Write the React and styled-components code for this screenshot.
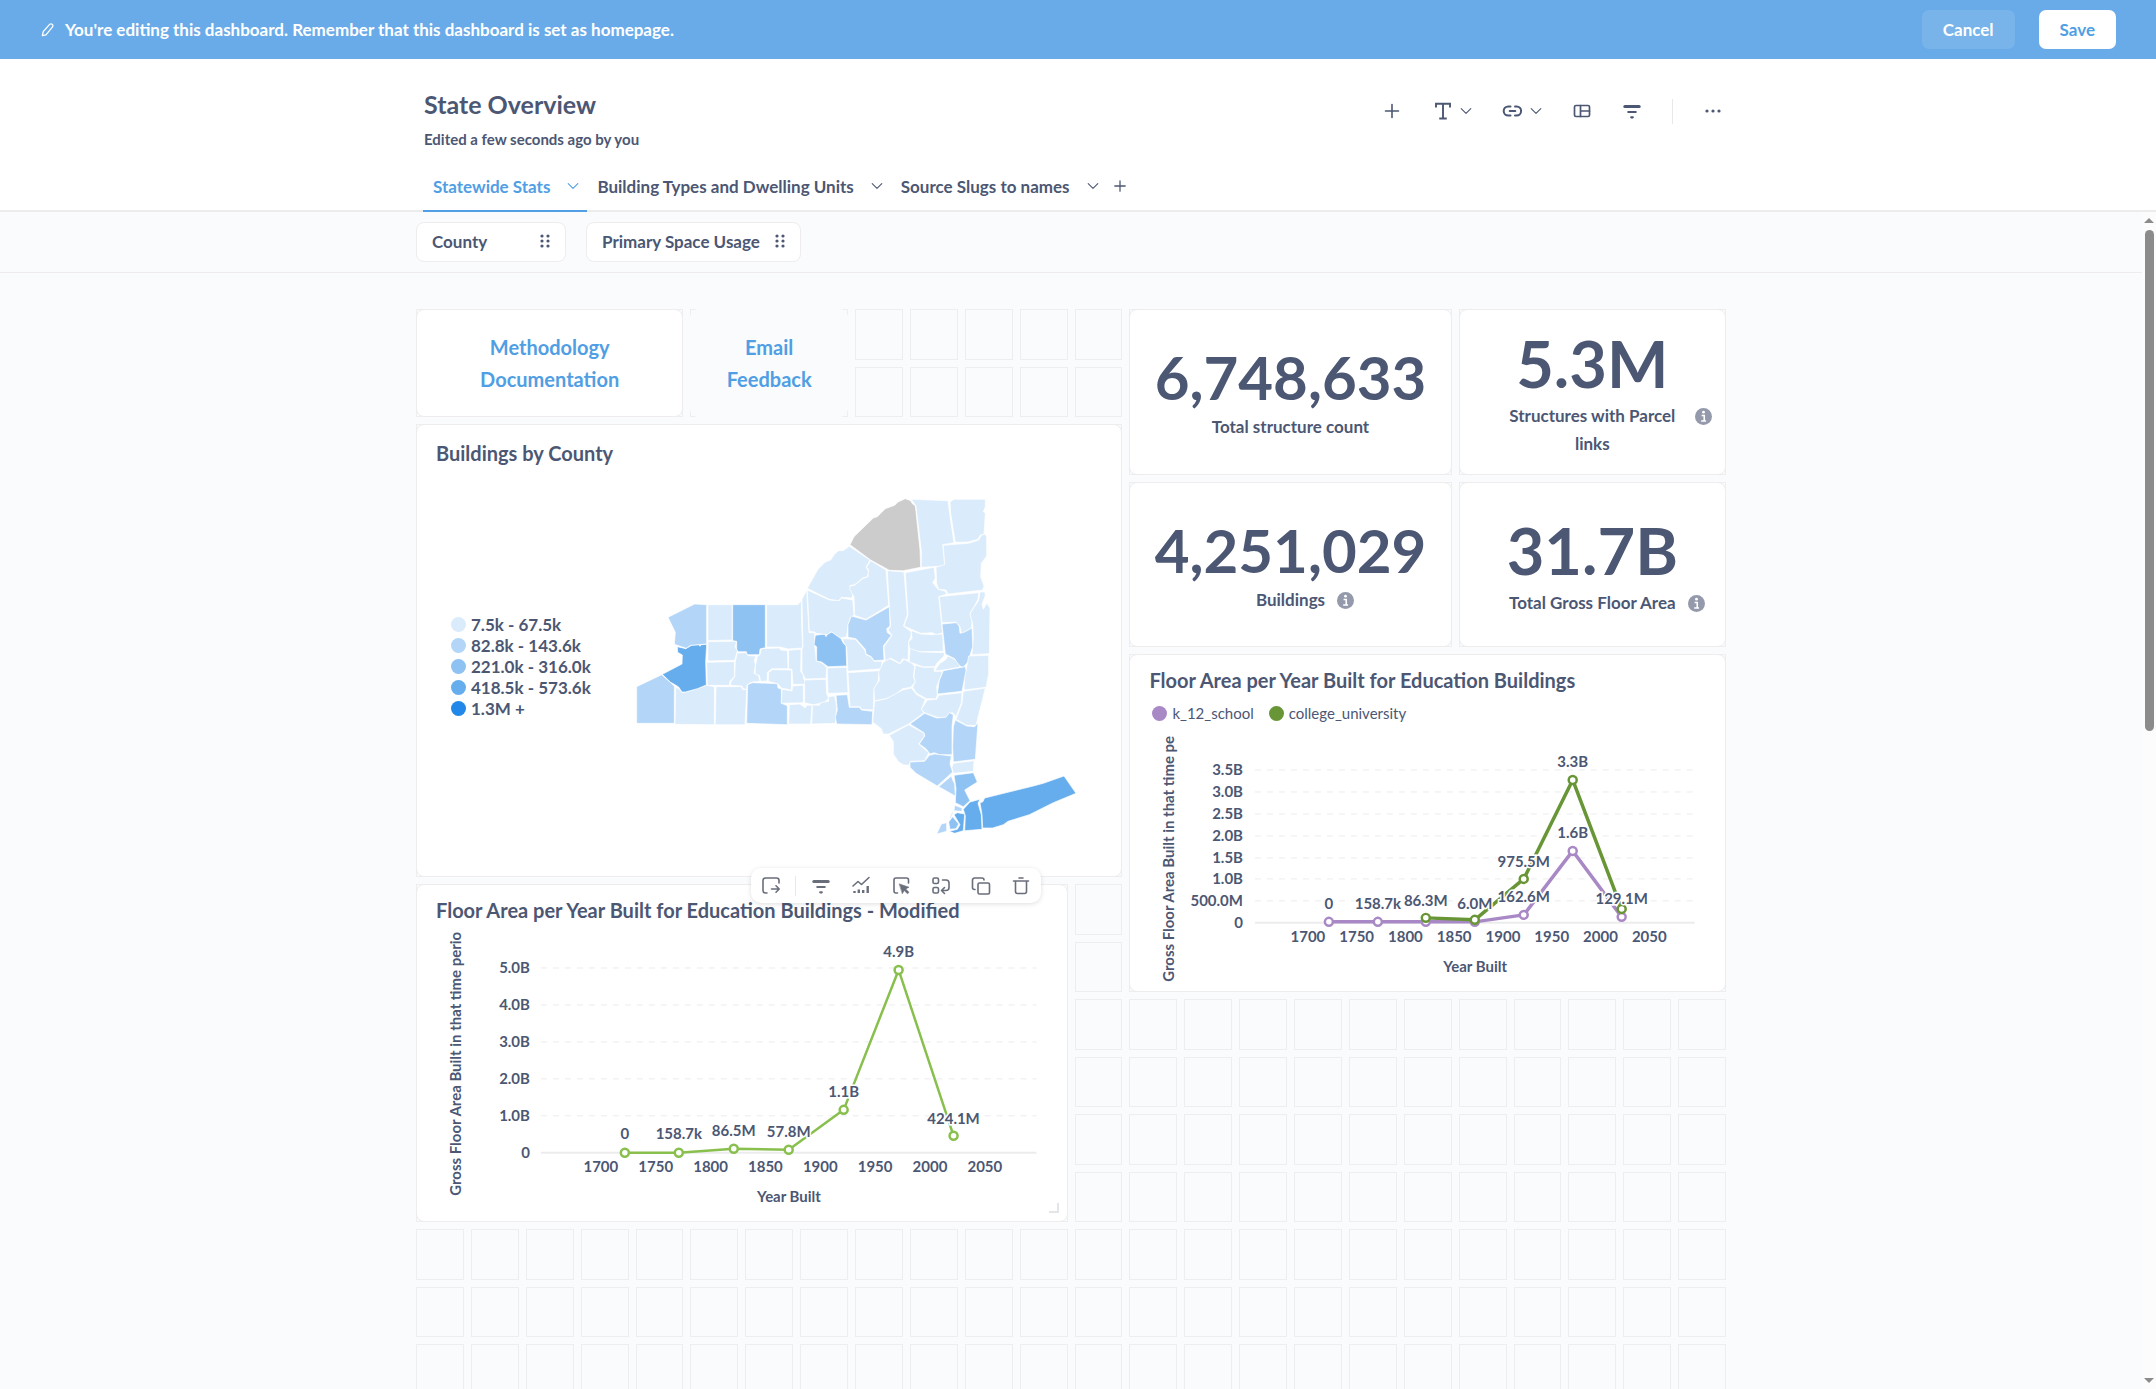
import styled, { createGlobalStyle, css } from 'styled-components';

const colors = {
  brand: '#509ee3',
  banner: '#69abe8',
  text: '#4c5773',
  muted: '#949aab',
  icon: '#696e7b',
  border: '#eeecec',
  cell: '#eeeef0',
  page: '#f9fbfd',
};

const shades = {
  a: '#daebfb',
  b: '#b3d6f8',
  c: '#8ec2f3',
  d: '#66adee',
  e: '#2188e9',
  none: '#cccccc',
};

const mapLegend = [
  { shade: 'a', label: '7.5k - 67.5k' },
  { shade: 'b', label: '82.8k - 143.6k' },
  { shade: 'c', label: '221.0k - 316.0k' },
  { shade: 'd', label: '418.5k - 573.6k' },
  { shade: 'e', label: '1.3M +' },
];

// county outlines: [name, shade, points]
const counties = [
  ['Chautauqua', 'b', '50,620 125,584 152,608 163,619 163,730 50,730'],
  ['Cattaraugus', 'a', '167,622 178,628 186,638 198,636 232,626 260,616 283,620 283,734 165,733'],
  ['Allegany', 'a', '288,620 364,620 368,629 380,629 375,734 286,734'],
  ['Steuben', 'b', '383,614 397,608 472,611 474,624 484,627 484,670 502,677 502,734 380,730'],
  ['Erie', 'd', '172,500 197,506 215,496 237,494 240,499 244,494 260,493 257,545 259,615 232,626 196,636 186,636 176,621 160,611 152,607 127,583 186,552 187,525 173,517'],
  ['Niagara', 'b', '144,412 224,372 260,374 260,492 212,496 199,505 163,493 166,457'],
  ['Orleans', 'a', '264,374 336,374 336,480 264,482'],
  ['Monroe', 'c', '338,374 436,374 436,503 420,507 418,524 382,524 379,515 354,515 350,508 350,484 338,482'],
  ['Genesee', 'a', '264,485 342,484 350,486 345,500 352,512 344,541 264,543'],
  ['Wyoming', 'a', '260,547 343,545 343,590 330,602 328,616 262,616'],
  ['Livingston', 'a', '352,519 378,518 384,527 408,528 403,540 406,555 402,580 415,586 420,604 396,606 381,614 380,627 370,627 366,618 332,616 333,605 344,590 346,545'],
  ['Wayne', 'a', '440,374 534,374 544,362 545,440 548,504 505,507 480,501 440,501'],
  ['Ontario', 'a', '424,506 478,504 482,510 502,512 504,566 456,566 442,577 442,603 422,604 418,586 406,582 406,560 412,530 420,524'],
  ['Yates', 'a', '446,577 458,569 514,570 514,630 484,624 475,612 445,604'],
  ['Seneca', 'a', '506,511 543,508 542,574 550,586 550,597 562,608 556,613 519,613 516,568 506,566'],
  ['Cayuga', 'a', '546,358 560,330 567,458 584,458 584,496 589,543 606,549 620,562 618,595 556,597 546,575 546,508 549,500'],
  ['Schuyler', 'a', '518,618 550,616 550,668 484,670 486,628 516,633'],
  ['Tompkins', 'a', '554,600 618,598 620,642 626,655 612,668 590,672 580,674 554,668'],
  ['Chemung', 'a', '508,674 540,672 556,684 560,676 576,676 572,732 506,732'],
  ['Tioga', 'a', '578,675 598,676 602,668 626,664 626,650 644,648 650,680 646,730 575,732'],
  ['Broome', 'b', '648,646 682,644 688,682 718,682 724,690 758,694 756,734 650,732 646,712 652,690'],
  ['Cortland', 'a', '622,564 680,562 684,638 624,640'],
  ['Chenango', 'a', '684,578 778,572 774,605 762,625 760,690 725,688 720,680 690,680'],
  ['Onondaga', 'c', '586,466 614,462 618,470 622,462 636,456 662,474 670,490 678,496 680,558 624,560 605,546 590,543 590,500 582,494'],
  ['Oswego', 'a', '562,330 628,360 658,362 664,354 698,360 702,406 692,412 684,435 680,470 660,474 634,455 622,464 588,460 584,456 568,454'],
  ['Jefferson', 'a', '562,325 594,268 616,246 632,240 644,222 656,212 670,212 688,199 750,240 738,262 746,275 742,290 728,294 704,314 690,316 692,330 698,340 696,354 664,352 656,362 628,358'],
  ['St. Lawrence', 'none', '690,194 702,170 760,114 772,110 796,86 824,76 834,66 856,56 872,62 876,70 886,78 900,210 902,262 850,272 808,271 752,240'],
  ['Lewis', 'a', '752,242 798,270 806,376 738,418 704,406 702,350 690,330 690,318 704,316 728,296 744,290 746,270 740,262'],
  ['Franklin', 'a', '874,58 984,62 990,110 1002,188 968,194 974,252 968,258 904,262 904,212 888,78'],
  ['Clinton', 'a', '990,66 1002,58 1096,58 1096,80 1090,95 1096,100 1092,162 1080,166 1074,178 1044,186 1006,187 992,100'],
  ['Essex', 'a', '970,196 1046,190 1076,180 1084,166 1096,162 1100,172 1100,228 1084,250 1082,290 1092,318 1088,330 984,342 978,330 956,328 950,310 948,262 974,254'],
  ['Hamilton', 'a', '856,278 942,262 946,294 938,308 954,328 976,334 980,342 956,350 964,425 968,458 950,464 936,458 902,460 852,438 864,405'],
  ['Herkimer', 'a', '802,272 852,276 862,404 850,438 874,456 872,472 866,484 864,540 848,536 840,550 812,534 796,544 792,500 816,466 804,450 812,438 808,376'],
  ['Oneida', 'b', '694,408 738,420 808,380 810,438 800,446 802,458 814,466 790,498 792,540 762,542 754,530 738,522 736,508 708,476 684,472 684,434'],
  ['Madison', 'a', '668,476 706,478 734,510 738,524 752,530 762,544 786,544 784,566 684,574 680,500 672,490'],
  ['Otsego', 'a', '790,546 810,536 840,552 852,538 876,550 884,560 880,590 886,606 872,622 848,626 822,646 798,656 764,662 762,624 778,602 776,575'],
  ['Delaware', 'a', '764,664 800,656 848,630 874,624 890,644 916,658 904,688 912,698 866,732 806,762 790,762 784,746 766,732 758,726'],
  ['Fulton', 'a', '874,452 902,462 936,464 968,462 970,514 870,516 866,486 876,475'],
  ['Montgomery', 'a', '870,506 900,516 974,518 972,528 952,548 944,560 908,560 868,545'],
  ['Warren', 'a', '958,350 1076,338 1074,358 1062,380 1050,400 1056,425 1054,444 1034,456 1024,460 1020,440 1008,426 966,428'],
  ['Washington', 'a', '1080,336 1094,336 1096,346 1086,372 1090,388 1100,370 1110,384 1108,521 1056,524 1060,470 1058,430 1050,402 1062,382 1076,362'],
  ['Saratoga', 'b', '966,432 1010,428 1018,440 1020,460 1034,456 1056,444 1058,500 1044,545 1030,562 1014,556 1004,536 976,522'],
  ['Rensselaer', 'a', '1046,528 1106,526 1106,582 1098,622 1032,630 1034,590 1042,552'],
  ['Schenectady', 'a', '944,572 960,550 976,540 984,528 1004,538 1020,558 1016,562 970,570'],
  ['Albany', 'b', '970,572 1036,560 1038,572 1026,634 952,642 958,600'],
  ['Schoharie', 'a', '886,556 908,562 944,562 942,574 968,574 950,620 952,645 948,656 920,656 890,640 878,622 886,605 882,590'],
  ['Greene', 'a', '922,660 950,658 956,646 1026,638 1024,668 1008,710 998,698 986,700 980,712 952,712 914,698 904,688'],
  ['Columbia', 'a', '1030,634 1096,624 1068,736 1040,736 1008,718 1026,670'],
  ['Ulster', 'b', '870,732 914,700 950,714 978,712 988,698 1000,704 996,740 996,824 958,824 942,818 930,822 918,806 898,792 914,768 912,758'],
  ['Dutchess', 'b', '1006,720 1040,738 1064,740 1074,728 1066,838 1000,846 998,800 1000,740'],
  ['Sullivan', 'a', '866,734 912,760 912,770 896,792 926,818 914,842 872,844 866,856 850,854 836,846 820,822 820,785 808,766'],
  ['Orange', 'b', '870,846 914,844 928,826 944,822 994,828 990,852 998,876 952,918 888,880 870,862'],
  ['Putnam', 'a', '1000,850 1062,842 1060,874 1000,880 996,862'],
  ['Rockland', 'b', '956,920 994,888 998,900 1004,912 1006,948'],
  ['Westchester', 'c', '1002,886 1060,878 1072,906 1034,930 1050,962 1030,980 1006,968 1008,925'],
  ['Nassau', 'd', '1030,988 1050,966 1080,958 1074,970 1084,1004 1086,1048 1034,1052 1036,1008'],
  ['Suffolk', 'd', '1080,968 1088,966 1094,954 1240,918 1270,910 1332,888 1368,940 1300,968 1228,1004 1164,1024 1150,1034 1118,1044 1088,1044 1086,1004'],
  ['Bronx', 'b', '1004,976 1026,984 1026,994 1002,992'],
  ['New York', 'a', '988,1014 996,996 1001,996 992,1016'],
  ['Queens', 'd', '1002,1004 1012,998 1034,1002 1030,1052 1004,1060 988,1054 1012,1048 1020,1034'],
  ['Kings', 'c', '986,1026 998,1010 1016,1032 1008,1046 990,1048'],
  ['Richmond', 'b', '950,1062 964,1032 980,1028 980,1054'],
];

const years = [1700, 1750, 1800, 1850, 1900, 1950, 2000, 2050];

const modifiedChart = {
  width: 612,
  height: 275,
  bottom: 14,
  left: 105,
  right: 601,
  zero: 221,
  step: 37,
  yTicks: ['0', '1.0B', '2.0B', '3.0B', '4.0B', '5.0B'],
  firstTick: 165,
  pitch: 54.9,
  titleY: 264,
  series: [
    {
      color: '#88bf4d',
      width: 2.5,
      points: [[189, 221], [243, 221], [298, 217], [353, 218], [408, 178], [463, 38], [518, 204]],
    },
  ],
  values: [
    ['0', 189, 207], ['158.7k', 243, 207], ['86.5M', 298, 204], ['57.8M', 353, 205],
    ['1.1B', 408, 165], ['4.9B', 463, 25], ['424.1M', 518, 192],
  ],
};

const educationChart = {
  width: 557,
  height: 247,
  bottom: 9,
  left: 106,
  right: 546,
  zero: 188,
  step: 21.8,
  yTicks: ['0', '500.0M', '1.0B', '1.5B', '2.0B', '2.5B', '3.0B', '3.5B'],
  firstTick: 159,
  pitch: 48.8,
  titleY: 247,
  series: [
    {
      color: '#a989c5',
      width: 3.5,
      points: [[180, 187], [229, 187], [277, 187], [326, 187], [375, 180], [424, 116], [473, 182]],
    },
    {
      color: '#689636',
      width: 3.5,
      points: [[277, 183], [326, 185], [375, 144], [424, 45], [473, 174]],
    },
  ],
  values: [
    ['0', 180, 174], ['158.7k', 229, 174], ['86.3M', 277, 171], ['6.0M', 326, 174],
    ['975.5M', 375, 132], ['162.6M', 375, 167], ['3.3B', 424, 32], ['1.6B', 424, 103], ['129.1M', 473, 169],
  ],
};

const CELL_COUNT = 24 * 20;

function Icon({ size = 20, children }) {
  return (
    <svg
      width={size}
      height={size}
      viewBox="0 0 20 20"
      fill="none"
      stroke="currentColor"
      strokeWidth="1.6"
      strokeLinecap="round"
      strokeLinejoin="round"
      aria-hidden="true"
    >
      {children}
    </svg>
  );
}

const PlusIcon = ({ size }) => <Icon size={size}><path d="M10 3.5v13M3.5 10h13" /></Icon>;

const PencilIcon = () => (
  <Icon size={16}>
    <path d="M3 17l1-5L12 3c1-1 2.4-1 3.4 0s1 2.4 0 3.4L7.5 16z" />
  </Icon>
);

const ChevronIcon = () => <Icon size={12}><path d="M2 6l8 8 8-8" strokeWidth="1.8" /></Icon>;

const TextIcon = () => (
  <Icon>
    <path d="M4 5.5V2.8h14v2.7M11 3v14.5M8.200 17.500h5.6" strokeWidth="1.9" strokeLinecap="square" strokeLinejoin="miter" />
  </Icon>
);

const LinkIcon = () => (
  <Icon>
    <path d="M8.5 5.5H6.2a4.5 4.5 0 0 0 0 9h2.300M13 5.500h1.600a4.500 4.500 0 0 1 0 9H13M7.700 10h5.600" strokeWidth="2" />
  </Icon>
);

const LayoutIcon = () => (
  <Icon>
    <rect x="2.5" y="4.5" width="15" height="11" rx="1.5" strokeWidth="1.7" />
    <path d="M8.5 4.5v11M8.5 10h9" strokeWidth="1.7" />
  </Icon>
);

const FilterIcon = () => (
  <Icon>
    <path d="M2.8 5.5h14.4" strokeWidth="3" />
    <path d="M6.3 11h7.4M9.2 16.3h1.6" strokeWidth="2.2" />
  </Icon>
);

const DotsIcon = () => (
  <Icon>
    <g fill="currentColor" stroke="none">
      <circle cx="4" cy="10" r="1.6" />
      <circle cx="10" cy="10" r="1.6" />
      <circle cx="16" cy="10" r="1.6" />
    </g>
  </Icon>
);

const GripIcon = () => (
  <svg width="12" height="14" viewBox="0 0 12 14" fill="currentColor" aria-hidden="true">
    {[2, 7, 12].map((y) => (
      <g key={y}>
        <circle cx="3" cy={y} r="1.6" />
        <circle cx="9" cy={y} r="1.6" />
      </g>
    ))}
  </svg>
);

const InfoIcon = () => (
  <svg width="17" height="17" viewBox="0 0 16 16" aria-hidden="true">
    <circle cx="8" cy="8" r="8" fill={colors.muted} />
    <circle cx="8" cy="3.9" r="1.3" fill="#fff" />
    <path d="M6.2 7h2.500v5M5.800 12.300h4.600" fill="none" stroke="#fff" strokeWidth="1.5" />
  </svg>
);

const MoveTabIcon = () => (
  <Icon>
    <path d="M6 17H4.5A2.500 2.500 0 0 1 2 14.500v-10A2.500 2.500 0 0 1 4.500 2h11A2.500 2.500 0 0 1 18 4.500V7" />
    <path d="M10.5 13H18M15 9.800l3.200 3.200-3.200 3.200" />
  </Icon>
);

const VisualizeIcon = () => (
  <Icon>
    <path d="M2 10l5-4.5 3.5 3L18 1.500" />
    <path d="M3.500 15v2M7.800 13.500V17M12.200 14v3M16.700 10v7" strokeWidth="2.4" strokeLinecap="butt" />
  </Icon>
);

const ClickIcon = () => (
  <Icon>
    <path d="M6.5 17H5a2 2 0 0 1-2-2V4a2 2 0 0 1 2-2h10.500a2 2 0 0 1 2 2v3" />
    <path d="M8.5 8l9.5 3.200-3.300 1.800 3.300 3.300-1.500 1.500-3.300-3.300-1.700 3z" fill="currentColor" strokeWidth="0.6" />
  </Icon>
);

const ReplaceIcon = () => (
  <Icon>
    <rect x="2" y="2" width="5.5" height="5.5" rx="1.5" />
    <rect x="2" y="11.5" width="5.5" height="5.5" rx="1.5" />
    <path d="M11.5 4H15a3 3 0 0 1 3 3v4.500a3 3 0 0 1-3 3h-3.500M13.500 11.500l-3 3 3 3" />
  </Icon>
);

const CopyIcon = () => (
  <Icon>
    <rect x="7" y="7" width="11.5" height="11" rx="1.5" />
    <path d="M4 13.5h-.5a2 2 0 0 1-2-2V4a2 2 0 0 1 2-2H11a2 2 0 0 1 2 2" />
  </Icon>
);

const TrashIcon = () => (
  <Icon>
    <path d="M2.5 5h15M8 2h4M4.500 5v10.500a2 2 0 0 0 2 2h7a2 2 0 0 0 2-2V5" />
  </Icon>
);

function CountyMap() {
  return (
    <MapSvg viewBox="0 0 1440 1122" role="img" aria-label="Buildings by County">
      {counties.map(([name, shade, points]) => (
        <polygon key={name} points={points} fill={shades[shade]} stroke="#fff" strokeWidth="2" />
      ))}
    </MapSvg>
  );
}

function LineChart({ chart }) {
  const center = chart.firstTick + chart.pitch * 3.43;
  return (
    <ChartSvg viewBox={`0 0 ${chart.width} ${chart.height}`} $bottom={chart.bottom} role="img">
      {chart.yTicks.map((tick, i) => {
        const y = Math.round(chart.zero - i * chart.step);
        return (
          <g key={tick}>
            <line
              x1={chart.left}
              x2={chart.right}
              y1={y}
              y2={y}
              stroke="#ececee"
              strokeWidth={i ? 1 : 2}
              strokeDasharray={i ? '6 6' : undefined}
            />
            <text x={94} y={y + 5} textAnchor="end">{tick}</text>
          </g>
        );
      })}
      {years.map((year, i) => (
        <text key={year} x={chart.firstTick + i * chart.pitch} y={chart.zero + 19} textAnchor="middle">
          {year}
        </text>
      ))}
      {chart.series.map((s) => (
        <g key={s.color} fill="none" stroke={s.color}>
          <polyline points={s.points.join(' ')} strokeWidth={s.width} strokeLinejoin="round" />
          {s.points.map(([x, y]) => (
            <circle key={x} cx={x} cy={y} r="4" fill="#fff" strokeWidth="2.5" />
          ))}
        </g>
      ))}
      {chart.values.map(([label, x, y]) => (
        <text key={label} x={x} y={y} textAnchor="middle" stroke="#fff" strokeWidth="3" paintOrder="stroke">
          {label}
        </text>
      ))}
      <text x={center} y={chart.zero + 49} textAnchor="middle">Year Built</text>
      <text transform={`translate(25 ${chart.titleY}) rotate(-90)`}>
        Gross Floor Area Built in that time period
      </text>
    </ChartSvg>
  );
}

function Scalar({ area, value, label, info, large }) {
  return (
    <ScalarCard $area={area}>
      <ScalarValue $large={large}>{value}</ScalarValue>
      <ScalarLabel>
        {info && <ScalarSpacer />}
        <span>{label}</span>
        {info && <InfoIcon />}
      </ScalarLabel>
    </ScalarCard>
  );
}

function App() {
  return (
    <Page>
      <GlobalStyle />
      <Banner>
        <PencilIcon />
        <BannerText>You're editing this dashboard. Remember that this dashboard is set as homepage.</BannerText>
        <BannerButton>Cancel</BannerButton>
        <BannerButton $primary>Save</BannerButton>
      </Banner>

      <Header>
        <Container>
          <HeaderTop>
            <div>
              <Title>State Overview</Title>
              <Subtitle>Edited a few seconds ago by you</Subtitle>
            </div>
            <Tools>
              <IconButton aria-label="Add question"><PlusIcon /></IconButton>
              <IconButton aria-label="Add text"><TextIcon /><ChevronIcon /></IconButton>
              <IconButton aria-label="Add link"><LinkIcon /><ChevronIcon /></IconButton>
              <IconButton aria-label="Add section"><LayoutIcon /></IconButton>
              <IconButton aria-label="Add filter"><FilterIcon /></IconButton>
              <ToolDivider />
              <IconButton aria-label="More"><DotsIcon /></IconButton>
            </Tools>
          </HeaderTop>
          <Tabs role="tablist">
            <Tab role="tab" aria-selected="true" $active>Statewide Stats<ChevronIcon /></Tab>
            <Tab role="tab" aria-selected="false">Building Types and Dwelling Units<ChevronIcon /></Tab>
            <Tab role="tab" aria-selected="false">Source Slugs to names<ChevronIcon /></Tab>
            <AddTab aria-label="Create new tab"><PlusIcon size={16} /></AddTab>
          </Tabs>
        </Container>
      </Header>

      <Body>
        <Content>
          <FilterBar>
            <Filters>
              <Filter>County<GripIcon /></Filter>
              <Filter>Primary Space Usage<GripIcon /></Filter>
            </Filters>
          </FilterBar>

          <Stage>
            <CellGrid>
              {Array.from({ length: CELL_COUNT }, (_, i) => <Cell key={i} />)}
            </CellGrid>
            <CardGrid>
              <LinkCard $area="1 / 1 / 3 / 6">
                <a href="#methodology">Methodology Documentation</a>
              </LinkCard>
              <LinkCard $area="1 / 6 / 3 / 9" $plain>
                <a href="#feedback">Email Feedback</a>
              </LinkCard>
              <Scalar area="1 / 14 / 4 / 20" value="6,748,633" label="Total structure count" />
              <Scalar area="1 / 20 / 4 / 25" value="5.3M" label="Structures with Parcel links" info large />
              <Scalar area="4 / 14 / 7 / 20" value="4,251,029" label="Buildings" info />
              <Scalar area="4 / 20 / 7 / 25" value="31.7B" label="Total Gross Floor Area" info large />

              <Card $area="3 / 1 / 11 / 14">
                <CardTitle>Buildings by County</CardTitle>
                <MapBody>
                  <MapLegend>
                    {mapLegend.map((item) => (
                      <MapLegendItem key={item.shade}>
                        <Dot $color={shades[item.shade]} />
                        {item.label}
                      </MapLegendItem>
                    ))}
                  </MapLegend>
                  <CountyMap />
                </MapBody>
              </Card>

              <ChartCard $area="11 / 1 / 17 / 13">
                <CardTitle>Floor Area per Year Built for Education Buildings - Modified</CardTitle>
                <LineChart chart={modifiedChart} />
                <CardActions>
                  <ActionButton aria-label="Move to tab"><MoveTabIcon /></ActionButton>
                  <ActionDivider />
                  <ActionButton aria-label="Add a filter"><FilterIcon /></ActionButton>
                  <ActionButton aria-label="Visualization options"><VisualizeIcon /></ActionButton>
                  <ActionButton aria-label="Click behavior"><ClickIcon /></ActionButton>
                  <ActionButton aria-label="Replace"><ReplaceIcon /></ActionButton>
                  <ActionButton aria-label="Duplicate"><CopyIcon /></ActionButton>
                  <ActionButton aria-label="Remove"><TrashIcon /></ActionButton>
                </CardActions>
                <ResizeHandle />
              </ChartCard>

              <ChartCard $area="7 / 14 / 13 / 25">
                <CardTitle>Floor Area per Year Built for Education Buildings</CardTitle>
                <SeriesLegend>
                  <SeriesItem><Dot $color="#a989c5" />k_12_school</SeriesItem>
                  <SeriesItem><Dot $color="#689636" />college_university</SeriesItem>
                </SeriesLegend>
                <LineChart chart={educationChart} />
              </ChartCard>
            </CardGrid>
          </Stage>
        </Content>
        <ScrollTrack>
          <ScrollArrow $up />
          <ScrollThumb />
          <ScrollArrow />
        </ScrollTrack>
      </Body>
    </Page>
  );
}

const GlobalStyle = createGlobalStyle`
  * {
    box-sizing: border-box;
  }
  body {
    margin: 0;
    font-family: Lato, sans-serif;
    font-weight: 700;
    color: ${colors.text};
  }
  button {
    font: inherit;
    color: inherit;
    background: none;
    border: none;
    padding: 0;
    cursor: pointer;
  }
  svg {
    flex-shrink: 0;
  }
`;

const Page = styled.div`
  display: flex;
  flex-direction: column;
  height: 100vh;
  overflow: hidden;
  background-color: #fff;
`;

// Banner
const Banner = styled.div`
  display: flex;
  align-items: center;
  gap: 24px;
  padding: 10px 40px;
  color: #fff;
  background-color: ${colors.banner};
`;

const BannerText = styled.span`
  flex: 1;
  margin-left: -15px;
  font-size: 17px;
  line-height: 21px;
`;

const BannerButton = styled.button`
  height: 39px;
  padding: 0 21px;
  font-size: 17px;
  border-radius: 7px;
  color: ${({ $primary }) => ($primary ? colors.brand : '#fff')};
  background-color: ${({ $primary }) => ($primary ? '#fff' : 'rgba(255, 255, 255, 0.1)')};
`;

// Header
const Header = styled.header`
  border-bottom: 2px solid #ececec;
`;

const Container = styled.div`
  max-width: 1310px;
  margin: 0 auto;
`;

const HeaderTop = styled.div`
  display: flex;
  justify-content: space-between;
  align-items: flex-start;
  padding: 30px 10px 14px 1px;
`;

const Title = styled.h1`
  margin: 0 0 11px;
  font-size: 25px;
  line-height: 30px;
`;

const Subtitle = styled.p`
  margin: 0;
  font-size: 15px;
  line-height: 18px;
`;

const Tools = styled.div`
  display: flex;
  align-items: center;
  gap: 30px;
  height: 44px;
`;

const IconButton = styled.button`
  display: flex;
  align-items: center;
  gap: 8px;
`;

const ToolDivider = styled.span`
  width: 1px;
  height: 25px;
  background-color: #e8e8ea;
`;

const Tabs = styled.div`
  display: flex;
  margin-bottom: -2px;
`;

const Tab = styled.button`
  display: flex;
  align-items: center;
  gap: 17px;
  height: 50px;
  padding: 0 8px 0 10px;
  font-size: 17px;
  border-bottom: 2px solid transparent;
  ${({ $active }) => $active && css`
    color: ${colors.brand};
    border-color: ${colors.brand};
  `}
`;

const AddTab = styled.button`
  display: flex;
  align-items: center;
  padding: 0 5px 2px;
`;

// Body
const Body = styled.div`
  display: flex;
  flex: 1;
  min-height: 0;
  background-color: ${colors.page};
`;

const Content = styled.main`
  flex: 1;
  min-width: 0;
  overflow: hidden;
`;

const FilterBar = styled.div`
  padding: 10px 0;
  border-bottom: 1px solid #eeecf0;
`;

const Filters = styled(Container)`
  display: flex;
  gap: 20px;
`;

const Filter = styled.button`
  display: flex;
  align-items: center;
  justify-content: space-between;
  gap: 14px;
  min-width: 150px;
  height: 40px;
  padding: 0 14px 2px 15px;
  font-size: 17px;
  background-color: #fff;
  border: 1px solid ${colors.border};
  border-radius: 8px;
`;

// Dashboard grid
const Stage = styled(Container)`
  display: grid;
  padding-top: 36px;
`;

const gridTracks = css`
  grid-area: 1 / 1;
  display: grid;
  grid-template-columns: repeat(24, minmax(0, 1fr));
  grid-auto-rows: 51px 50px;
  gap: 7px;
`;

const CellGrid = styled.div`
  ${gridTracks}
`;

const Cell = styled.div`
  border: 1px solid ${colors.cell};
`;

const CardGrid = styled.div`
  ${gridTracks}
`;

const Card = styled.section`
  grid-area: ${({ $area }) => $area};
  position: relative;
  display: flex;
  flex-direction: column;
  min-width: 0;
  padding: 14px 19px 0;
  background-color: #fff;
  border: 1px solid ${colors.border};
  border-radius: 8px;
`;

const ChartCard = styled(Card)`
  padding-top: 11px;
`;

const CardTitle = styled.h2`
  margin: 0;
  font-size: 20px;
  line-height: 28px;
`;

const LinkCard = styled(Card)`
  align-items: center;
  justify-content: center;
  padding: 0 19px;
  text-align: center;
  font-size: 20px;
  line-height: 32px;
  a {
    color: ${colors.brand};
    text-decoration: none;
  }
  ${({ $plain }) => $plain && css`
    background-color: ${colors.page};
    border-color: ${colors.page};
  `}
`;

const ScalarCard = styled(Card)`
  align-items: center;
  justify-content: center;
  padding: 0 13px 2px;
`;

const ScalarValue = styled.div`
  font-size: ${({ $large }) => ($large ? '65px' : '60px')};
  line-height: ${({ $large }) => ($large ? '78px' : '72px')};
`;

const ScalarLabel = styled.div`
  display: flex;
  gap: 12px;
  font-size: 17px;
  line-height: 28px;
  text-align: center;
  svg {
    margin-top: 6px;
  }
`;

const ScalarSpacer = styled.span`
  flex: 0 0 17px;
`;

const MapBody = styled.div`
  display: flex;
  align-items: center;
  justify-content: space-between;
  padding: 13px 2px 0 15px;
`;

const MapSvg = styled.svg`
  width: 480px;
  height: 374px;
`;

const MapLegend = styled.ul`
  margin: 0;
  padding: 0 0 2px;
  list-style: none;
`;

const MapLegendItem = styled.li`
  display: flex;
  align-items: center;
  gap: 5px;
  font-size: 17px;
  line-height: 21px;
`;

const Dot = styled.span`
  width: 15px;
  height: 15px;
  border-radius: 50%;
  background-color: ${({ $color }) => $color};
`;

const SeriesLegend = styled.div`
  display: flex;
  gap: 15px;
  padding: 9px 3px 0;
`;

const SeriesItem = styled.span`
  display: flex;
  align-items: center;
  gap: 5px;
  font-size: 15px;
  font-weight: 400;
  line-height: 20px;
`;

const ChartSvg = styled.svg`
  display: block;
  width: 100%;
  height: auto;
  margin-top: auto;
  margin-bottom: ${({ $bottom }) => $bottom}px;
  overflow: hidden;
  text {
    font-size: 15px;
    fill: ${colors.text};
  }
`;

const CardActions = styled.div`
  position: absolute;
  top: -17px;
  right: 26px;
  display: flex;
  align-items: center;
  height: 35px;
  color: ${colors.icon};
  background-color: #fff;
  border-radius: 10px;
  box-shadow: 0 1px 5px rgba(0, 0, 0, 0.13);
`;

const ActionButton = styled.button`
  display: flex;
  justify-content: center;
  width: 40px;
`;

const ActionDivider = styled.span`
  width: 1px;
  height: 20px;
  margin: 0 5px 0 4px;
  background-color: #e8e8ea;
`;

const ResizeHandle = styled.span`
  position: absolute;
  right: 8px;
  bottom: 8px;
  width: 10px;
  height: 10px;
  border: solid #e4e5e8;
  border-width: 0 2px 2px 0;
`;

// Scrollbar
const ScrollTrack = styled.div`
  display: flex;
  flex-direction: column;
  align-items: center;
  width: 14px;
  padding: 6px 0;
  background-color: #fcfcfc;
`;

const ScrollArrow = styled.span`
  border: solid transparent;
  border-width: 0 5px;
  ${({ $up }) => ($up ? 'border-bottom: 5px solid #8b8b8b;' : 'border-top: 5px solid #8b8b8b; margin-top: auto;')}
`;

const ScrollThumb = styled.span`
  width: 9px;
  height: 43%;
  margin-top: 7px;
  border-radius: 5px;
  background-color: #8b8b8b;
`;

export default App;
